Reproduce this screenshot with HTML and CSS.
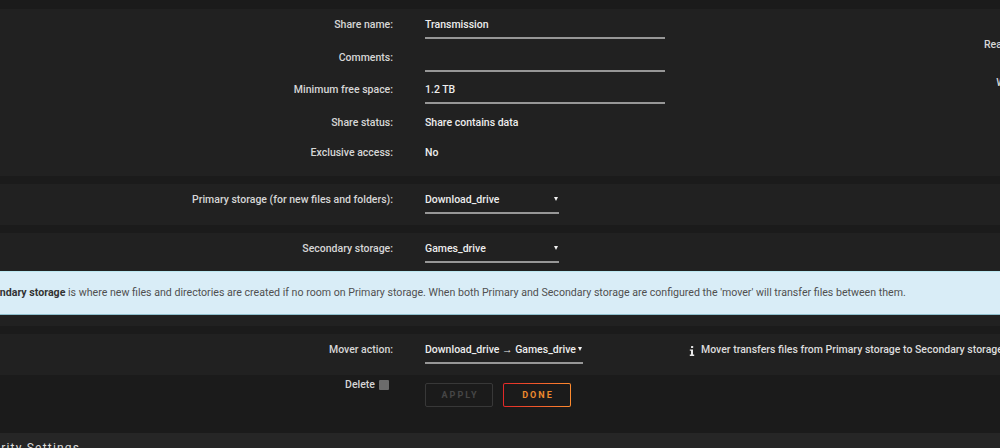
FILE: index.html
```html
<!DOCTYPE html>
<html lang="en">
<head>
    <meta charset="UTF-8">
    <meta name="viewport" content="width=device-width, initial-scale=1.0">
    <title>Share Settings - Transmission</title>
    <link rel="stylesheet" href="styles.css">
</head>
<body>
<div class="page">

    <!-- share details -->
    <div class="panel split">
        <div class="col-left">
            <div class="row">
                <div class="label">Share name:</div>
                <div class="value"><div class="input">Transmission</div></div>
            </div>
            <div class="row">
                <div class="label">Comments:</div>
                <div class="value"><div class="input"></div></div>
            </div>
            <div class="row">
                <div class="label">Minimum free space:</div>
                <div class="value"><div class="input">1.2 TB</div></div>
            </div>
            <div class="row row-text">
                <div class="label">Share status:</div>
                <div class="value text">Share contains data</div>
            </div>
            <div class="row row-text">
                <div class="label">Exclusive access:</div>
                <div class="value text">No</div>
            </div>
        </div>
        <div class="col-right">
            <div class="row row-side">
                <div class="label">Read settings from:</div>
                <div class="value"></div>
            </div>
            <div class="row row-side">
                <div class="label">Write settings to:</div>
                <div class="value"></div>
            </div>
        </div>
    </div>

    <!-- primary storage -->
    <div class="panel">
        <div class="col-left">
            <div class="row">
                <div class="label">Primary storage (for new files and folders):</div>
                <div class="value"><div class="select">Download_drive<span class="caret"></span></div></div>
            </div>
        </div>
    </div>

    <!-- secondary storage -->
    <div class="panel">
        <div class="col-left">
            <div class="row">
                <div class="label">Secondary storage:</div>
                <div class="value"><div class="select">Games_drive<span class="caret"></span></div></div>
            </div>
        </div>
        <div class="notice">
            <b>Secondary storage</b> is where new files and directories are created if no room on Primary storage. When both Primary and Secondary storage are configured the 'mover' will transfer files between them.
        </div>
    </div>

    <!-- mover -->
    <div class="panel split">
        <div class="col-left">
            <div class="row">
                <div class="label">Mover action:</div>
                <div class="value"><div class="select select-auto">Download_drive → Games_drive<span class="caret"></span></div></div>
            </div>
        </div>
        <div class="hint">
            <svg class="info-icon" width="6" height="10" viewBox="0 0 6 10"><rect x="2" y="0" width="2.2" height="2" rx="0.5" fill="#e6e6e6"/><path d="M0.8 3.4H4V8.6H5.2V10H0.8V8.6H2V4.8H0.8Z" fill="#e6e6e6"/></svg>
            Mover transfers files from Primary storage to Secondary storage
        </div>
    </div>

    <!-- actions -->
    <div class="actions">
        <div class="label">Delete<span class="check"></span></div>
        <div class="buttons">
            <button class="btn" disabled>APPLY</button>
            <button class="btn btn-done">DONE</button>
        </div>
    </div>

    <div class="section-title">Security Settings</div>
</div>
</body>
</html>
```

FILE: styles.css
```css
body {
    margin: 0;
    overflow: hidden;
    background-color: #1b1b1b;
    font-family: Roboto, "Liberation Sans", sans-serif;
    font-size: 10.5px;
    font-weight: 500;
    line-height: 16px;
    color: #d6d6d6;
}
.page {
    width: 1200px;
    margin-left: -30px;
    padding-top: 9px;
}
.panel {
    background-color: #212121;
    padding: 4px 0 11px;
    margin-bottom: 8px;
}
.split {
    display: flex;
}
.col-left {
    width: 719px;
    flex-shrink: 0;
    display: flex;
    flex-direction: column;
    gap: 6.5px;
}
.col-right {
    flex: 1;
    display: flex;
    flex-direction: column;
    gap: 12px;
    padding-top: 20px;
}
.row {
    display: grid;
    grid-template-columns: 423px 1fr;
    column-gap: 32px;
    height: 26px;
}
.row-text {
    height: 24px;
}
.row-side {
    grid-template-columns: 387px 1fr;
}
.label {
    text-align: right;
    padding-top: 4px;
    white-space: nowrap;
}
.value {
    color: #ededed;
}
.value.text {
    padding-top: 4px;
}
.input {
    width: 240px;
    height: 16px;
    padding: 4px 0;
    border-bottom: 2px solid #979797;
}
.select {
    width: 133px;
    height: 16px;
    padding: 4px 1px 4px 0;
    border-bottom: 2px solid #979797;
    display: flex;
    justify-content: space-between;
    align-items: center;
    white-space: nowrap;
}
.select-auto {
    width: auto;
    display: inline-flex;
    gap: 2px;
}
.caret {
    width: 0;
    height: 0;
    border-left: 2.5px solid transparent;
    border-right: 2.5px solid transparent;
    border-top: 4px solid #f2f2f2;
    margin-top: -2px;
}
.hint {
    padding-top: 4px;
    white-space: nowrap;
    display: flex;
    align-items: flex-start;
    color: #dcdcdc;
}
.info-icon {
    margin: 4px 6px 0 0;
}
.notice {
    margin-top: 8px;
    padding: 13px 6px;
    background-color: #d9edf7;
    border-top: 1px solid #bce8f1;
    border-bottom: 1px solid #8fbfcd;
    color: #505050;
    font-size: 10.62px;
    font-weight: 400;
    white-space: nowrap;
}
.notice b {
    color: #333;
    font-weight: 700;
}
.actions {
    display: grid;
    grid-template-columns: 423px 1fr;
    column-gap: 32px;
    margin-top: -8px;
    padding-top: 2px;
    height: 56px;
}
.actions .label {
    padding-top: 0;
    padding-right: 4px;
    display: flex;
    justify-content: flex-end;
    align-items: center;
    height: 16px;
    gap: 4px;
}
.check {
    width: 10px;
    height: 10px;
    border-radius: 1px;
    background-color: #6c6c6c;
}
.buttons {
    display: flex;
    gap: 10px;
    padding-top: 6px;
}
.btn {
    width: 68px;
    height: 24px;
    font-family: Roboto, "Liberation Sans", sans-serif;
    font-size: 9px;
    font-weight: bold;
    letter-spacing: 2px;
    border: 1px solid #383838;
    border-radius: 2px;
    background: transparent;
    color: #464646;
    padding: 0 0 0 2px;
}
.btn-done {
    color: #ec8a2e;
    border: 1px solid transparent;
    background: linear-gradient(#1b1b1b, #1b1b1b) padding-box, linear-gradient(90deg, #e22828, #ff8c2f) border-box;
}
.section-title {
    background-color: #262626;
    height: 40px;
    padding-top: 7px;
    font-size: 12px;
    font-weight: 400;
    letter-spacing: 1.2px;
    color: #dedede;
}
```
